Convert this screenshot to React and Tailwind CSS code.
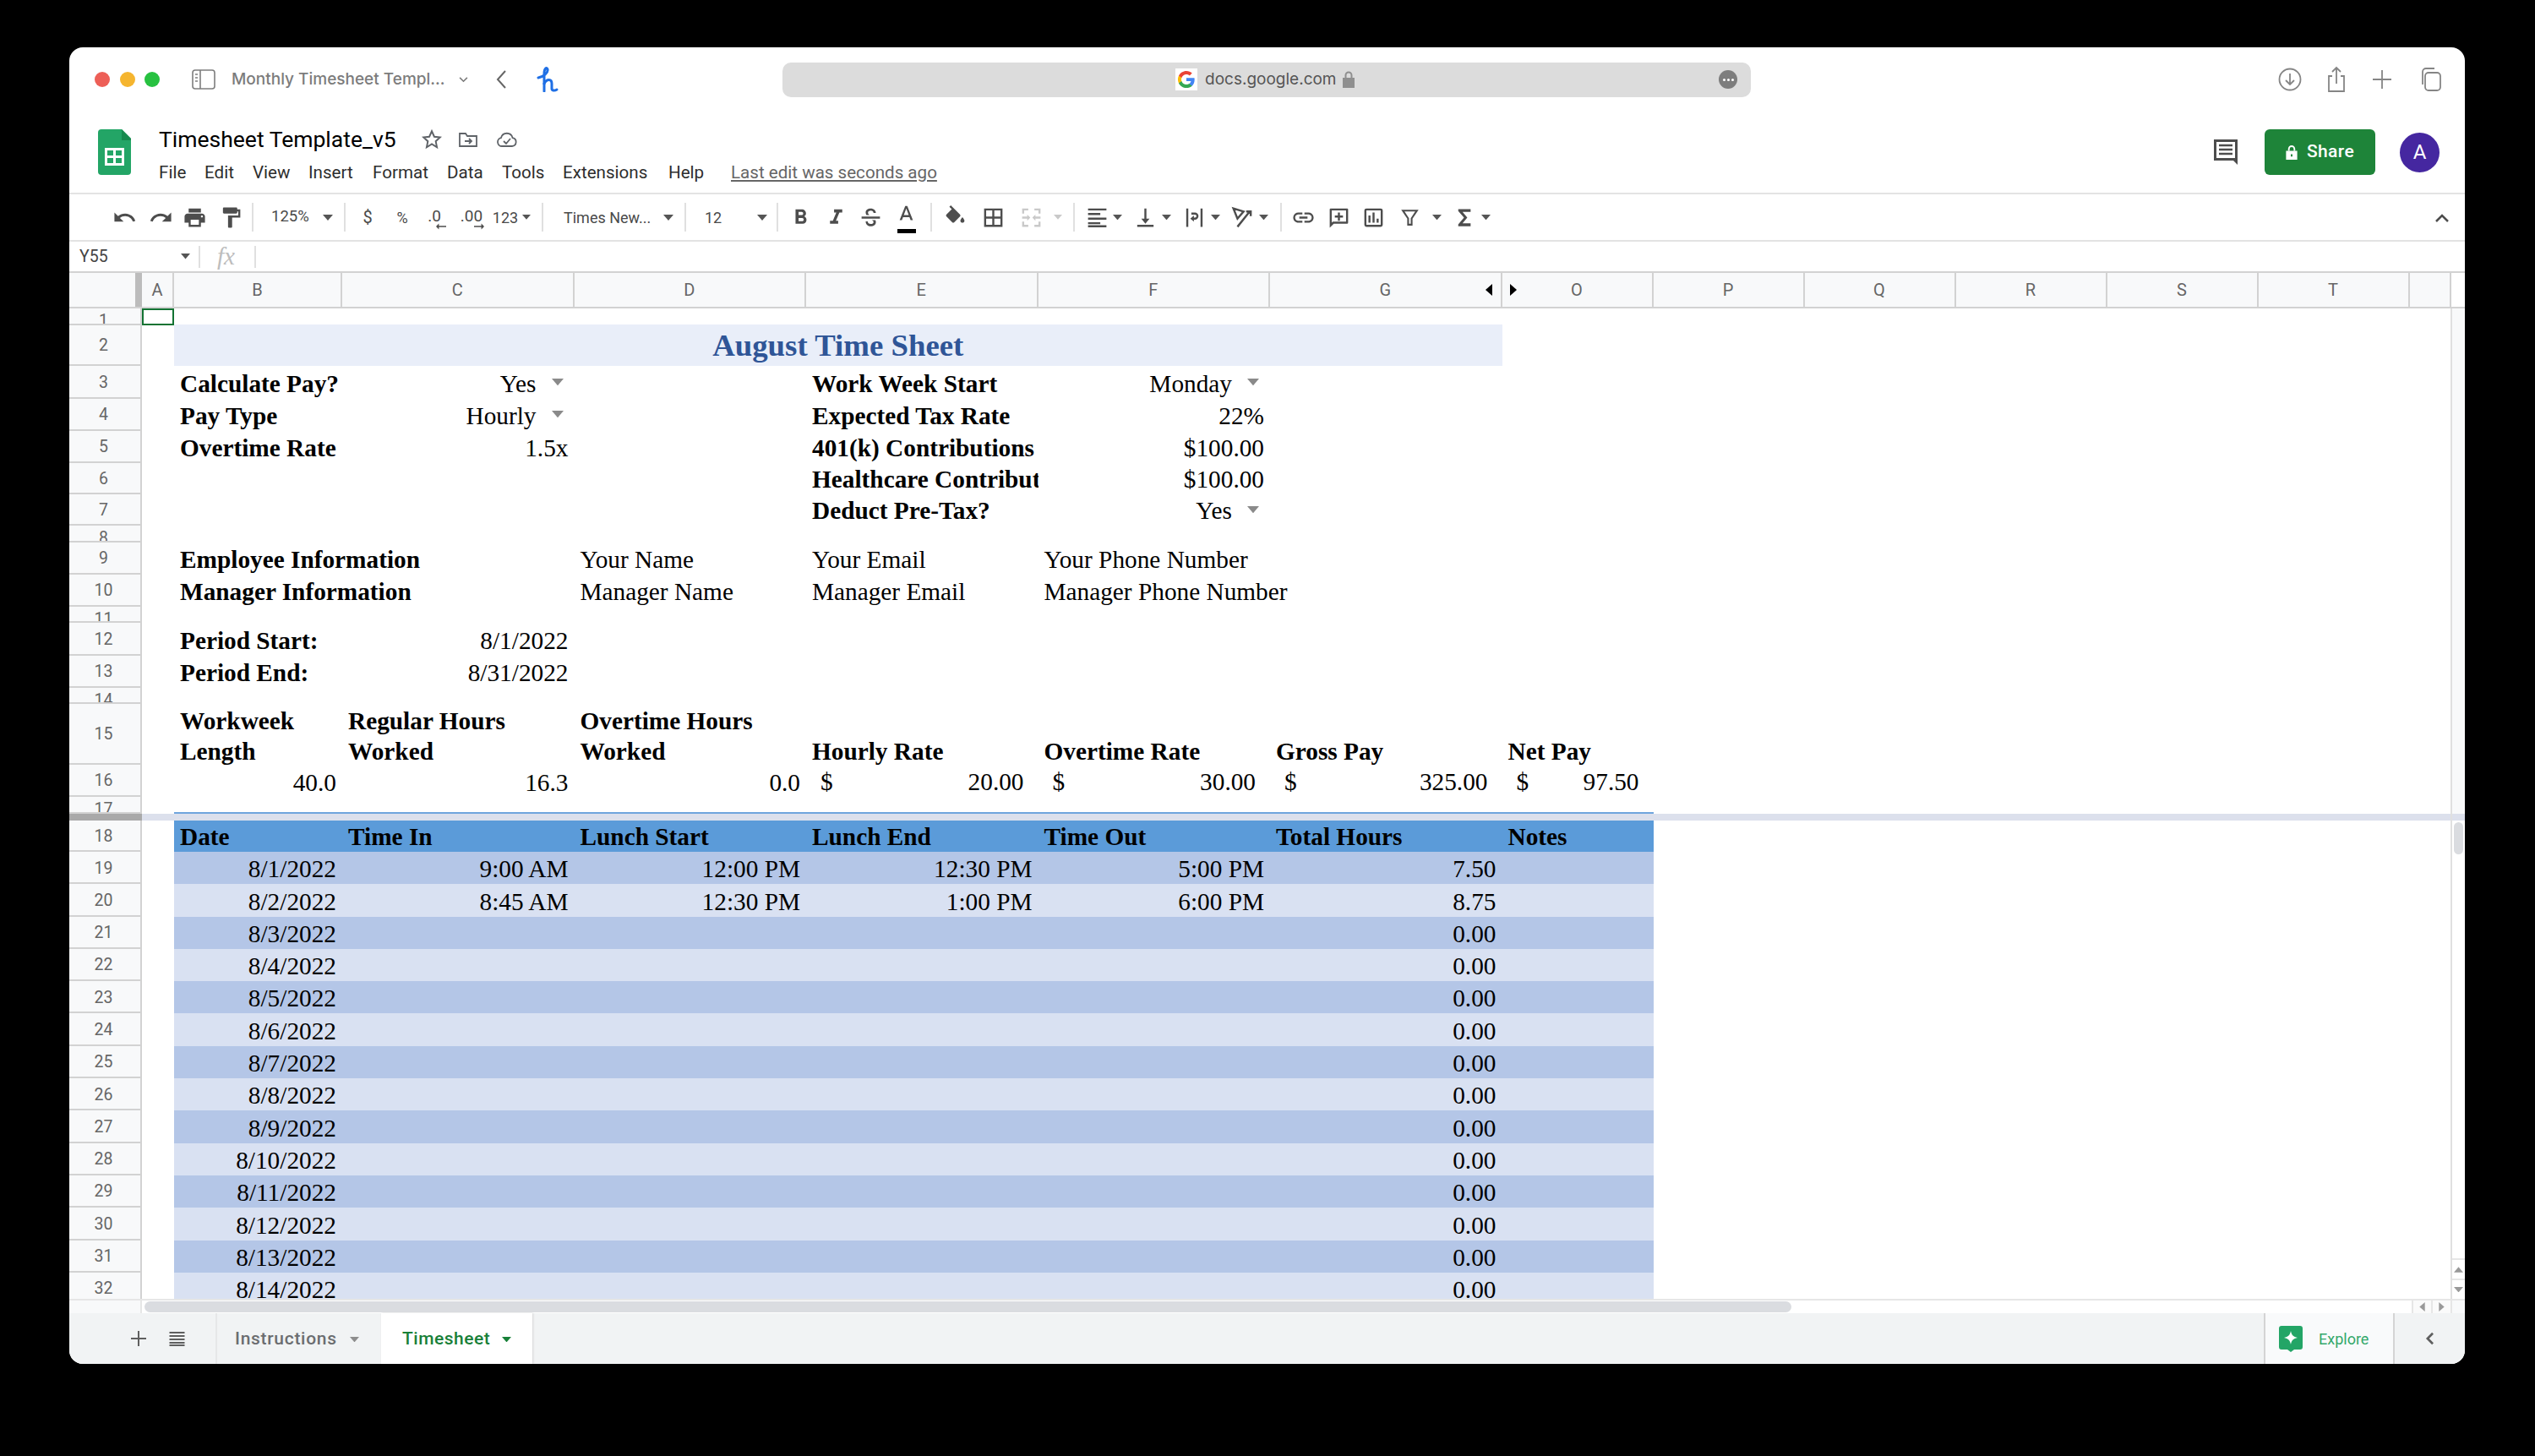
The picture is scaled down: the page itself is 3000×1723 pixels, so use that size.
import React from 'react';

const COLS = 'grid grid-cols-[86px_38px_199px_274.5px_274.5px_274.5px_274.5px_274.5px_179px_179px_179px_179px_179px_179px_49.5px]';
const SERIF = "font-['Liberation_Serif',serif] text-[29.3px] text-black";

const Mat = ({ d, s = 28, c = '#4d4d4d', className = '' }) => (
  <svg viewBox="0 0 24 24" width={s} height={s} fill={c} className={className}><path d={d} /></svg>
);

const Caret = ({ c = '#555', w = 12 }) => (
  <svg viewBox="0 0 12 7" width={w} height={(w * 7) / 12} fill={c}><path d="M0 0h12L6 7z" /></svg>
);

const Box = ({ className = '', children }) => (
  <div className={`flex h-full items-center justify-center shrink-0 ${className}`}>{children}</div>
);

const Sep = () => <div className="h-[34px] w-[2px] shrink-0 bg-[#e0e0e0]" />;

const TB = ({ className = '', children }) => (
  <span className={`font-['Roboto',sans-serif] text-[#4a4a4a] whitespace-nowrap ${className}`}>{children}</span>
);

function Toolbar() {
  return (
    <div className="flex h-[58px] items-center border-y-2 border-[#e3e3e3] pl-[44px]">
      <Box className="w-[42px]"><Mat s={29} d="M12.5 8c-2.65 0-5.05.99-6.9 2.6L2 7v9h9l-3.62-3.62c1.39-1.16 3.16-1.88 5.12-1.88 3.54 0 6.55 2.31 7.6 5.5l2.37-.78C21.08 11.03 17.15 8 12.5 8z" /></Box>
      <Box className="w-[44px]"><Mat s={29} d="M18.4 10.6C16.55 8.99 14.15 8 11.5 8c-4.65 0-8.58 3.03-9.96 7.22L3.9 16c1.05-3.19 4.05-5.5 7.6-5.5 1.95 0 3.73.72 5.12 1.88L13 16h9V7l-3.6 3.6z" /></Box>
      <Box className="w-[36px]"><Mat s={29} d="M19 8H5c-1.66 0-3 1.34-3 3v6h4v4h12v-4h4v-6c0-1.66-1.34-3-3-3zm-3 11H8v-5h8v5zm3-7c-.55 0-1-.45-1-1s.45-1 1-1 1 .45 1 1-.45 1-1 1zm-1-9H6v4h12V3z" /></Box>
      <Box className="w-[50px]"><Mat s={29} d="M18 4V3c0-.55-.45-1-1-1H5c-.55 0-1 .45-1 1v4c0 .55.45 1 1 1h12c.55 0 1-.45 1-1V6h1v4H9v11c0 .55.45 1 1 1h2c.55 0 1-.45 1-1v-9h8V4h-3z" /></Box>
      <Sep />
      <Box className="w-[69px] justify-start pl-[21px]"><TB className="text-[18.5px]">125%</TB></Box>
      <Box className="w-[38px]"><Caret /></Box>
      <Sep />
      <Box className="w-[52px]"><TB className="text-[20px]">$</TB></Box>
      <Box className="w-[30px]"><TB className="text-[18px]">%</TB></Box>
      <Box className="relative w-[46px]">
        <TB className="-mt-[2px] text-[19px]">.0</TB>
        <svg viewBox="0 0 14 8" width="12" height="8" fill="#4d4d4d" className="absolute left-[25px] top-[34px]"><path d="M4 0v3h10v2H4v3L0 4z" /></svg>
      </Box>
      <Box className="relative w-[42px]">
        <TB className="-mt-[2px] text-[19px]">.00</TB>
        <svg viewBox="0 0 14 8" width="12" height="8" fill="#4d4d4d" className="absolute left-[24px] top-[34px]"><path d="M10 0v3H0v2h10v3l4-4z" /></svg>
      </Box>
      <Box className="w-[38px]"><TB className="text-[18px]">123</TB></Box>
      <Box className="w-[12px]"><Caret w={10} /></Box>
      <div className="w-[12px] shrink-0" />
      <Sep />
      <Box className="w-[136px] justify-start pl-[24px]"><TB className="text-[18px]">Times New...</TB></Box>
      <Box className="w-[24px]"><Caret /></Box>
      <div className="w-[7px] shrink-0" />
      <Sep />
      <Box className="w-[78px] justify-start pl-[22px]"><TB className="text-[18px]">12</TB></Box>
      <Box className="w-[24px]"><Caret /></Box>
      <div className="w-[5px] shrink-0" />
      <Sep />
      <Box className="w-[52px]"><Mat s={29} d="M15.6 10.79c.97-.67 1.65-1.77 1.65-2.79 0-2.26-1.75-4-4-4H7v14h7.04c2.09 0 3.71-1.7 3.71-3.79 0-1.52-.86-2.82-2.15-3.42zM10 6.5h3c.83 0 1.5.67 1.5 1.5s-.67 1.5-1.5 1.5h-3v-3zm3.5 9H10v-3h3.5c.83 0 1.5.67 1.5 1.5s-.67 1.5-1.5 1.5z" /></Box>
      <Box className="w-[32px]"><Mat s={29} d="M10 4v3h2.21l-3.42 8H6v3h8v-3h-2.21l3.42-8H18V4z" /></Box>
      <Box className="w-[50px]"><Mat s={29} d="M12 3C9 3 7 4.500 7 7c0 1 .3 1.700.8 2.500h3.200C9.800 8.900 9.300 8 9.300 7c0-1 1-1.800 2.700-1.800s2.700 1 2.700 2.300H17C17 5 15 3 12 3zM3 11v2h18v-2H3zm9.900 3.500c1.300.5 1.800 1.200 1.800 2 0 1-1.100 1.700-2.700 1.700-1.800 0-3-.9-3-2.500H7c0 3 2.300 4.800 5 4.800 3 0 5-1.600 5-4 0-.8-.2-1.400-.5-2z" /></Box>
      <Box className="relative w-[34px]">
        <svg viewBox="0 0 24 24" width="29" height="29" fill="#4d4d4d" className="-mt-[6px]"><path d="M11 3L5.500 17h2.250l1.120-3h6.250l1.120 3h2.250L13 3h-2zm-1.380 9L12 5.670 14.380 12H9.620z" /></svg>
        <div className="absolute left-[7px] top-[41px] h-[5px] w-[22px] bg-black" />
      </Box>
      <div className="w-[12px] shrink-0" />
      <Sep />
      <Box className="w-[54px]"><Mat s={29} d="M16.56 8.94L7.62 0 6.21 1.41l2.38 2.38-5.15 5.15c-.59.59-.59 1.54 0 2.12l5.5 5.5c.29.29.68.44 1.06.44s.77-.15 1.06-.44l5.5-5.5c.59-.58.59-1.53 0-2.12zM19 11.500s-2 2.170-2 3.500c0 1.100.9 2 2 2s2-.9 2-2c0-1.330-2-3.500-2-3.500z" /></Box>
      <Box className="w-[36px]"><Mat s={29} d="M3 3v18h18V3H3zm8 16H5v-6h6v6zm0-8H5V5h6v6zm8 8h-6v-6h6v6zm0-8h-6V5h6v6z" /></Box>
      <Box className="w-[54px]"><Mat s={29} c="#c9c9c9" d="M3 3h6v2H5v3H3V3zm12 0h6v5h-2V5h-4V3zM3 16h2v3h4v2H3v-5zm16 0h2v5h-6v-2h4v-3zM3 11h5V9l3 3-3 3v-2H3v-2zm18 0v2h-5v2l-3-3 3-3v2h5z" /></Box>
      <Box className="w-[10px]"><Caret c="#c9c9c9" w={10} /></Box>
      <div className="w-[13px] shrink-0" />
      <Sep />
      <Box className="ml-[9px] w-[34px]"><Mat s={29} d="M3 3h18v2H3V3zm0 4.500h12v2H3v-2zM3 12h18v2H3v-2zm0 4.500h12v2H3v-2zM3 19.500h18v2H3v-2z" /></Box>
      <Box className="w-[14px]"><Caret w={11} /></Box>
      <Box className="ml-[8px] w-[36px]"><Mat s={29} d="M11 3h2v10h3l-4 5-4-5h3V3zM4 19h16v2H4v-2z" /></Box>
      <Box className="w-[14px]"><Caret w={11} /></Box>
      <Box className="ml-[8px] w-[36px]"><Mat s={29} d="M4 3h2v18H4V3zm14 0h2v18h-2V3zM9 7h3.500a3.500 3.500 0 0 1 0 7H11.500v2L8 13l3.500-3v2h1a1.500 1.500 0 0 0 0-3H9V7z" /></Box>
      <Box className="w-[14px]"><Caret w={11} /></Box>
      <Box className="ml-[7px] w-[36px]">
        <svg viewBox="0 0 24 24" width="29" height="29" fill="none" stroke="#4d4d4d" strokeWidth="2"><path d="M3 3l10 3-6 7-4-10zM7 21L19 6M15.500 6H20v4.500" /></svg>
      </Box>
      <Box className="w-[14px]"><Caret w={11} /></Box>
      <div className="w-[13px] shrink-0" />
      <Sep />
      <Box className="w-[50px]"><Mat s={29} d="M3.900 12c0-1.710 1.390-3.100 3.100-3.100h4V7H7c-2.760 0-5 2.240-5 5s2.240 5 5 5h4v-1.900H7c-1.710 0-3.100-1.390-3.100-3.100zM8 13h8v-2H8v2zm9-6h-4v1.900h4c1.710 0 3.100 1.390 3.100 3.100s-1.390 3.100-3.100 3.100h-4V17h4c2.760 0 5-2.240 5-5s-2.240-5-5-5z" /></Box>
      <Box className="w-[34px]"><Mat s={29} d="M4 3h16a1 1 0 0 1 1 1v13a1 1 0 0 1-1 1H7l-4 4V4a1 1 0 0 1 1-1zm1 2v12l1-1h13V5H5zm6 2h2v3h3v2h-3v3h-2v-3H8v-2h3V7z" /></Box>
      <Box className="w-[48px]"><Mat s={29} d="M5 3h14a2 2 0 0 1 2 2v14a2 2 0 0 1-2 2H5a2 2 0 0 1-2-2V5a2 2 0 0 1 2-2zm0 2v14h14V5H5zm2 5h2v7H7v-7zm4-3h2v10h-2V7zm4 6h2v4h-2v-4z" /></Box>
      <Box className="w-[38px]">
        <svg viewBox="0 0 24 24" width="25" height="25" fill="none" stroke="#4d4d4d" strokeWidth="2"><path d="M4 4h16l-6 9v7h-4v-7L4 4z" /></svg>
      </Box>
      <Box className="ml-[6px] w-[14px]"><Caret w={11} /></Box>
      <Box className="ml-[6px] w-[38px]"><Mat s={27} d="M6 3h13v3H10.500l5 6-5 6H19v3H6v-2l6-7-6-7V3z" /></Box>
      <Box className="w-[14px]"><Caret w={11} /></Box>
      <Box className="ml-auto mr-[12px] w-[30px]">
        <svg viewBox="0 0 18 11" width="18" height="11" fill="none" stroke="#4d4d4d" strokeWidth="2.500"><path d="M2 10l7-7 7 7" /></svg>
      </Box>
    </div>
  );
}

const H = ['A', 'B', 'C', 'D', 'E', 'F', 'G', 'O', 'P', 'Q', 'R', 'S', 'T', ''];

function ColHeader() {
  return (
    <div className="flex h-[44px] border-y-2 border-[#d2d2d2]">
      <div className={`${COLS} w-[2818px] shrink-0`}>
        <div className="flex justify-end bg-[#f8f9fa]"><div className="w-[8px] bg-[#bcbcbc]" /></div>
        {H.map((l, i) => (
          <div key={i} className="relative flex items-center justify-center border-r-2 border-[#d2d2d2] bg-[#f8f9fa] font-['Roboto',sans-serif] text-[20px] text-[#666]">
            {l}
            {l === 'G' && (
              <svg viewBox="0 0 8 14" width="8" height="14" fill="#000" className="absolute right-[10px] top-[13px]"><path d="M8 0v14L0 7z" /></svg>
            )}
            {l === 'O' && (
              <svg viewBox="0 0 8 14" width="8" height="14" fill="#000" className="absolute left-[9px] top-[13px]"><path d="M0 0v14l8-7z" /></svg>
            )}
          </div>
        ))}
      </div>
    </div>
  );
}

const Head = ({ n, short }) => (
  <div className={`flex justify-center overflow-hidden border-r-2 border-b-2 border-[#d2d2d2] bg-[#f8f9fa] pr-[3px] font-['Roboto',sans-serif] text-[19.5px] text-[#666] ${short ? 'leading-[30px]' : 'items-center pt-[2px]'}`}>
    {n}
  </div>
);

const B = (t, extra = {}) => ({ t, bold: true, ...extra });
const T = (t, extra = {}) => ({ t, ...extra });
const R = (t, extra = {}) => ({ t, right: true, ...extra });
const Acc = (v) => ({ acc: v });

function Cell({ c, bg = '' }) {
  if (!c) return <div className={bg} />;
  if (c.acc) {
    return (
      <div className={`flex items-end justify-between px-[17px] ${SERIF} ${bg}`}>
        <span className="leading-[35px]">$</span>
        <span className="leading-[35px]">{c.acc}</span>
      </div>
    );
  }
  const lead = c.wrap ? 'whitespace-pre leading-[36px] -mb-[2px]' : c.tight ? 'leading-[34px]' : 'leading-[36px]';
  return (
    <div className={`relative flex items-end whitespace-nowrap ${SERIF} ${c.right ? 'justify-end' : ''} ${c.dd ? 'pr-[45px]' : 'px-[7px]'} ${c.clip ? 'overflow-hidden pr-0' : ''} ${bg}`}>
      <span className={`${lead} ${c.bold ? 'font-bold' : ''}`}>{c.t}</span>
      {c.dd && (
        <span className="absolute right-[13px] top-1/2 -translate-y-[60%]"><Caret c="#8a8a8a" w={14} /></span>
      )}
    </div>
  );
}

const Row = ({ n, h, short, cells = [] }) => (
  <div className={`${COLS} ${h}`}>
    <Head n={n} short={short} />
    <div />
    {cells.map((c, i) => <Cell key={i} c={c} />)}
  </div>
);

const tableRows = [
  ['8/1/2022', '9:00 AM', '12:00 PM', '12:30 PM', '5:00 PM', '7.50'],
  ['8/2/2022', '8:45 AM', '12:30 PM', '1:00 PM', '6:00 PM', '8.75'],
  ['8/3/2022', '', '', '', '', '0.00'],
  ['8/4/2022', '', '', '', '', '0.00'],
  ['8/5/2022', '', '', '', '', '0.00'],
  ['8/6/2022', '', '', '', '', '0.00'],
  ['8/7/2022', '', '', '', '', '0.00'],
  ['8/8/2022', '', '', '', '', '0.00'],
  ['8/9/2022', '', '', '', '', '0.00'],
  ['8/10/2022', '', '', '', '', '0.00'],
  ['8/11/2022', '', '', '', '', '0.00'],
  ['8/12/2022', '', '', '', '', '0.00'],
  ['8/13/2022', '', '', '', '', '0.00'],
  ['8/14/2022', '', '', '', '', '0.00'],
];

function Sheet() {
  return (
    <div className="flex h-[1172px] overflow-hidden">
      <div className="w-[2818px] shrink-0 overflow-hidden">
        <div className={`${COLS} relative h-[19px]`}>
          <Head n={1} short />
          <div className="h-[20px] border-2 border-[#137333]" />
        </div>
        <div className={`${COLS} h-[49px]`}>
          <Head n={2} />
          <div />
          <div className="col-span-6 flex items-end justify-center bg-[#e9eef9] font-['Liberation_Serif',serif] text-[36.8px] font-bold leading-[49px] text-[#2f5597]">
            August Time Sheet
          </div>
        </div>
        <Row n={3} h="h-[39px]" cells={[B('Calculate Pay?'), R('Yes', { dd: 1 }), null, B('Work Week Start'), R('Monday', { dd: 1 })]} />
        <Row n={4} h="h-[38px]" cells={[B('Pay Type'), R('Hourly', { dd: 1 }), null, B('Expected Tax Rate'), R('22%')]} />
        <Row n={5} h="h-[38px]" cells={[B('Overtime Rate'), R('1.5x'), null, B('401(k) Contributions'), R('$100.00')]} />
        <Row n={6} h="h-[37px]" cells={[null, null, null, B('Healthcare Contributions', { clip: 1 }), R('$100.00')]} />
        <Row n={7} h="h-[37px]" cells={[null, null, null, B('Deduct Pre-Tax?'), R('Yes', { dd: 1 })]} />
        <Row n={8} h="h-[20px]" short />
        <Row n={9} h="h-[38px]" cells={[B('Employee Information'), null, T('Your Name'), T('Your Email'), T('Your Phone Number')]} />
        <Row n={10} h="h-[38px]" cells={[B('Manager Information'), null, T('Manager Name'), T('Manager Email'), T('Manager Phone Number')]} />
        <Row n={11} h="h-[19px]" short />
        <Row n={12} h="h-[39px]" cells={[B('Period Start:'), R('8/1/2022')]} />
        <Row n={13} h="h-[38px]" cells={[B('Period End:'), R('8/31/2022')]} />
        <Row n={14} h="h-[19px]" short />
        <Row
          n={15}
          h="h-[72px]"
          cells={[
            B('Workweek\nLength', { wrap: 1 }),
            B('Regular Hours\nWorked', { wrap: 1 }),
            B('Overtime Hours\nWorked', { wrap: 1 }),
            B('Hourly Rate', { wrap: 1 }),
            B('Overtime Rate', { wrap: 1 }),
            B('Gross Pay', { wrap: 1 }),
            B('Net Pay', { wrap: 1 }),
          ]}
        />
        <Row n={16} h="h-[38px]" cells={[R('40.0', { tight: 1 }), R('16.3', { tight: 1 }), R('0.0', { tight: 1 }), Acc('20.00'), Acc('30.00'), Acc('325.00'), Acc('97.50')]} />
        <div className={`${COLS} h-[20px]`}>
          <Head n={17} short />
          <div />
          <div className="col-span-7 border-b-2 border-[#6fa5dd]" />
        </div>
        <div className="flex h-[8px]">
          <div className="w-[86px] bg-[#a9a9a9]" />
          <div className="flex-1 bg-[#dce0ec]" />
        </div>
        <div className={`${COLS} h-[37px]`}>
          <Head n={18} />
          <div />
          {['Date', 'Time In', 'Lunch Start', 'Lunch End', 'Time Out', 'Total Hours', 'Notes'].map((t) => (
            <Cell key={t} c={B(t)} bg="bg-[#5b9bd9]" />
          ))}
        </div>
        {tableRows.map((r, i) => {
          const bg = i % 2 === 0 ? 'bg-[#b4c6e7]' : 'bg-[#d9e1f2]';
          return (
            <div key={i} className={`${COLS} h-[38.3px]`}>
              <Head n={19 + i} />
              <div />
              {r.map((v, j) => <Cell key={j} c={v ? R(v) : null} bg={bg} />)}
              <div className={bg} />
            </div>
          );
        })}
      </div>
      <div className="flex w-[17px] shrink-0 flex-col border-l-2 border-[#e0e0e0]">
        <div className="h-[598px] bg-[#f8f9fa]" />
        <div className="h-[8px] bg-[#dce0ec]" />
        <div className="mx-[2px] mt-[2px] h-[38px] rounded-full bg-[#dadce0]" />
        <div className="flex-1" />
        <div className="flex h-[24px] items-center justify-center border-t-2 border-[#e6e6e6]">
          <svg viewBox="0 0 12 7" width="11" height="7" fill="#999"><path d="M0 7h12L6 0z" /></svg>
        </div>
        <div className="flex h-[24px] items-center justify-center border-t-2 border-[#e6e6e6]">
          <Caret c="#999" w={11} />
        </div>
      </div>
    </div>
  );
}

function HScroll() {
  return (
    <div className="flex h-[17px] border-t-2 border-[#e6e6e6]">
      <div className="w-[86px] shrink-0 border-r-2 border-[#e6e6e6] bg-[#f8f9fa]" />
      <div className="ml-[3px] mt-[1px] h-[13px] w-[1949px] rounded-full bg-[#dadce0]" />
      <div className="flex-1" />
      <div className="flex w-[23px] items-center justify-center border-l-2 border-[#e6e6e6] bg-[#fafafa]">
        <svg viewBox="0 0 7 12" width="7" height="11" fill="#999"><path d="M7 0v12L0 6z" /></svg>
      </div>
      <div className="flex w-[23px] items-center justify-center border-l-2 border-[#e6e6e6] bg-[#fafafa]">
        <svg viewBox="0 0 7 12" width="7" height="11" fill="#999"><path d="M0 0v12l7-6z" /></svg>
      </div>
      <div className="w-[17px] border-l-2 border-[#e6e6e6] bg-[#f8f9fa]" />
    </div>
  );
}

function TabBar() {
  return (
    <div className="flex h-[60px] items-stretch bg-[#f1f3f4] font-['Roboto',sans-serif]">
      <Box className="ml-[66px] w-[32px]">
        <svg viewBox="0 0 18 18" width="18" height="18" fill="#5f5f5f"><path d="M8 0h2v8h8v2h-8v8H8v-8H0V8h8z" /></svg>
      </Box>
      <Box className="ml-[13.5px] w-[32px]">
        <svg viewBox="0 0 18 18" width="19" height="18" fill="#5f5f5f"><path d="M0 1h18v2H0zM0 5h18v2H0zM0 9h18v2H0zM0 13h18v2H0zM0 16h18v2H0z" /></svg>
      </Box>
      <div className="ml-[29.5px] flex w-[196px] items-center border-l-2 border-[#e6e7e8] pl-[21px] pt-[2px]">
        <span className="text-[21px] font-medium tracking-[0.7px] text-[#6b6d70]">Instructions</span>
        <span className="ml-[15px]"><Caret c="#8d8d8d" w={11} /></span>
      </div>
      <div className="flex w-[179px] items-center bg-white pl-[25px] pt-[2px] shadow-[1px_0_2px_#d5d5d5]">
        <span className="text-[21px] font-medium tracking-[0.5px] text-[#188038]">Timesheet</span>
        <span className="ml-[14px]"><Caret c="#188038" w={11} /></span>
      </div>
      <div className="ml-auto flex w-[155px] items-center border-x-2 border-[#d4d4d4] bg-[#f9fafb] pl-[16px]">
        <svg viewBox="0 0 28 31" width="28" height="31">
          <path fill="#23a566" d="M3 0h22a3 3 0 0 1 3 3v22a3 3 0 0 1-3 3h-7l-4 3-4-3H3a3 3 0 0 1-3-3V3a3 3 0 0 1 3-3z" />
          <path fill="#fff" d="M14 6c1 5 3 7 8 8-5 1-7 3-8 8-1-5-3-7-8-8 5-1 7-3 8-8z" />
        </svg>
        <span className="ml-[19px] text-[18px] text-[#34a86b]">Explore</span>
      </div>
      <Box className="w-[83px]">
        <svg viewBox="0 0 11 18" width="11" height="16" fill="none" stroke="#5f5f5f" strokeWidth="3"><path d="M9.500 2L2.500 9l7 7" /></svg>
      </Box>
    </div>
  );
}

function BrowserBar() {
  return (
    <div className="flex h-[76px] items-center">
      <div className="flex w-[844px] shrink-0 items-center pl-[30px]">
        <div className="flex gap-[11.5px]">
          <div className="h-[18px] w-[18px] rounded-full bg-[#ed5f57]" />
          <div className="h-[18px] w-[18px] rounded-full bg-[#f5b52f]" />
          <div className="h-[18px] w-[18px] rounded-full bg-[#27c140]" />
        </div>
        <svg viewBox="0 0 28 24" width="28" height="24" fill="none" stroke="#7d7d7d" strokeWidth="1.6" className="ml-[38px]">
          <rect x="1" y="1" width="26" height="22" rx="3" />
          <path d="M10 1v22M4 6h3M4 10h3M4 14h3" />
        </svg>
        <span className="ml-[19px] w-[251px] whitespace-nowrap font-['Inter',sans-serif] text-[19px] font-medium text-[#7c7c7c]">Monthly Timesheet Templ...</span>
        <svg viewBox="0 0 12 8" width="11" height="7" fill="none" stroke="#7c7c7c" strokeWidth="1.8" className="ml-[18px]"><path d="M1 1l5 5 5-5" /></svg>
        <svg viewBox="0 0 12 24" width="12" height="24" fill="none" stroke="#666" strokeWidth="2" className="ml-[33px]"><path d="M11 2L2 12l9 10" /></svg>
        <svg viewBox="0 0 26 30" width="26" height="30" fill="none" stroke="#1f6fe5" strokeWidth="3" strokeLinecap="round" strokeLinejoin="round" className="ml-[36px]">
          <path d="M2 13c6-1 12-6 11-10-1-3-4-1-4 5v21" />
          <path d="M9 20c3-6 9-6 9 0v6c0 2 3 3 6 1" />
        </svg>
      </div>
      <div className="relative flex h-[41px] w-[1146px] shrink-0 items-center rounded-[10px] bg-[#dcdcdc] pl-[465px]">
        <div className="flex h-[26px] w-[26px] items-center justify-center bg-white">
          <svg viewBox="0 0 24 24" width="22" height="22">
            <path fill="#4285F4" d="M22.56 12.25c0-.78-.07-1.53-.2-2.25H12v4.26h5.92c-.26 1.37-1.04 2.53-2.21 3.31v2.77h3.57c2.08-1.92 3.28-4.74 3.28-8.09z" />
            <path fill="#34A853" d="M12 23c2.97 0 5.46-.98 7.28-2.66l-3.57-2.77c-.98.66-2.23 1.06-3.71 1.06-2.86 0-5.29-1.93-6.16-4.53H2.18v2.84C3.99 20.53 7.7 23 12 23z" />
            <path fill="#FBBC05" d="M5.84 14.09c-.22-.66-.35-1.36-.35-2.09s.13-1.43.35-2.09V7.07H2.18C1.43 8.55 1 10.22 1 12s.43 3.45 1.18 4.93l2.85-2.22.81-.62z" />
            <path fill="#EA4335" d="M12 5.38c1.62 0 3.06.56 4.21 1.64l3.15-3.15C17.45 2.09 14.97 1 12 1 7.7 1 3.99 3.47 2.18 7.07l3.66 2.84c.87-2.6 3.3-4.53 6.16-4.53z" />
          </svg>
        </div>
        <span className="ml-[9px] whitespace-nowrap font-['Inter',sans-serif] text-[19px] text-[#555]">docs.google.com</span>
        <svg viewBox="0 0 14 20" width="14" height="20" fill="#8f8f8f" className="ml-[7px]">
          <path d="M0 8h14v12H0z" />
          <path d="M3.500 8V5a3.500 3.500 0 0 1 7 0v3" fill="none" stroke="#8f8f8f" strokeWidth="2" />
        </svg>
        <div className="absolute right-[16px] flex h-[22px] w-[22px] items-center justify-center gap-[2px] rounded-full bg-[#7d7d7d]">
          <span className="h-[3px] w-[3px] rounded-full bg-white" />
          <span className="h-[3px] w-[3px] rounded-full bg-white" />
          <span className="h-[3px] w-[3px] rounded-full bg-white" />
        </div>
      </div>
      <svg viewBox="0 0 28 28" width="28" height="28" fill="none" stroke="#858585" strokeWidth="1.8" className="ml-[624px] shrink-0">
        <circle cx="14" cy="14" r="12.5" />
        <path d="M14 7v13M9 15l5 5 5-5" />
      </svg>
      <svg viewBox="0 0 24 32" width="24" height="32" fill="none" stroke="#858585" strokeWidth="1.8" className="ml-[29px] shrink-0">
        <path d="M7 12H3v18h18V12h-4M12 21V2M7 7l5-5 5 5" />
      </svg>
      <svg viewBox="0 0 22 22" width="22" height="22" fill="none" stroke="#858585" strokeWidth="1.8" className="ml-[31px] shrink-0">
        <path d="M11 0v22M0 11h22" />
      </svg>
      <svg viewBox="0 0 27 28" width="27" height="28" fill="none" stroke="#858585" strokeWidth="1.8" className="ml-[33px] shrink-0">
        <rect x="7" y="6" width="18" height="21" rx="4" />
        <path d="M4 20V5a4 4 0 0 1 4-4h10" />
      </svg>
    </div>
  );
}

function DocHeader() {
  const menu = [
    ['File', 'w-[54px]'], ['Edit', 'w-[57px]'], ['View', 'w-[66px]'], ['Insert', 'w-[76px]'], ['Format', 'w-[88px]'],
    ['Data', 'w-[65px]'], ['Tools', 'w-[72px]'], ['Extensions', 'w-[125px]'], ['Help', 'w-[74px]'],
  ];
  return (
    <div className="flex h-[96px] items-center">
      <svg viewBox="0 0 39 54" width="39" height="54" className="ml-[34px] shrink-0">
        <path fill="#23a566" d="M4 0h24l11 11v39a4 4 0 0 1-4 4H4a4 4 0 0 1-4-4V4a4 4 0 0 1 4-4z" />
        <path fill="#178a4e" d="M28 0l11 11v2H28z" />
        <path fill="#fff" d="M8 22h23v21H8zm3 3v6h7v-6zm10 0v6h7v-6zM11 34v6h7v-6zm10 0v6h7v-6z" />
      </svg>
      <div className="ml-[33px] flex flex-col self-start pt-[15px] font-['Roboto',sans-serif]">
        <div className="flex h-[36px] items-center">
          <span className="w-[280px] whitespace-nowrap text-[26.5px] text-black">Timesheet Template_v5</span>
          <svg viewBox="0 0 24 24" width="26" height="26" fill="none" stroke="#5f6368" strokeWidth="1.8" className="ml-[30px]"><path d="M12 3l2.700 6 6.300.7-4.700 4.300 1.300 6.500L12 17l-5.600 3.500 1.300-6.500L3 9.700 9.300 9z" /></svg>
          <svg viewBox="0 0 24 24" width="24" height="24" fill="none" stroke="#5f6368" strokeWidth="1.8" className="ml-[18px]"><path d="M2 5h7l2 3h11v12H2zM8 14h8M13 11l3 3-3 3" /></svg>
          <svg viewBox="0 0 26 24" width="26" height="24" fill="none" stroke="#5f6368" strokeWidth="1.8" className="ml-[21px]"><path d="M7 20a5 5 0 0 1-1-9.900 7 7 0 0 1 13.600 0A5 5 0 0 1 19 20zM9 14l3 3 5-6" /></svg>
        </div>
        <div className="mt-[6px] flex h-[30px] items-center text-[20.6px] text-[#2e2e2e]">
          {menu.map(([m, w]) => <span key={m} className={`${w} whitespace-nowrap`}>{m}</span>)}
          <span className="whitespace-nowrap text-[#666] underline">Last edit was seconds ago</span>
        </div>
      </div>
      <svg viewBox="0 0 28 30" width="28" height="30" fill="none" className="ml-auto shrink-0">
        <path d="M1.500 1.500h25v22H1.500z" stroke="#4d4d4d" strokeWidth="3" />
        <path d="M6 7h16M6 12h16M6 17h16" stroke="#4d4d4d" strokeWidth="2.400" />
        <path d="M22 24h6v6z" fill="#4d4d4d" />
      </svg>
      <div className="ml-[32px] flex h-[54px] w-[131px] shrink-0 items-center justify-center gap-[11px] rounded-[6px] bg-[#1e8439] font-['Roboto',sans-serif] text-[21px] font-medium text-white">
        <svg viewBox="0 0 14 18" width="14" height="17" fill="#fff">
          <path fillRule="evenodd" d="M0 7h14v11H0zM6 11v3h2v-3z" />
          <path d="M3.500 7V4.500a3.500 3.500 0 0 1 7 0V7" fill="none" stroke="#fff" strokeWidth="2" />
        </svg>
        <span className="tracking-[0.4px]">Share</span>
      </div>
      <div className="ml-[29px] mr-[30px] flex h-[47px] w-[47px] shrink-0 items-center justify-center rounded-full bg-[#4527a0] font-['Roboto',sans-serif] text-[24px] text-white">A</div>
    </div>
  );
}

function FormulaBar() {
  return (
    <div className="flex h-[35px] items-center">
      <span className="ml-[12px] w-[120px] font-['Roboto',sans-serif] text-[19.5px] text-[#444]">Y55</span>
      <Caret w={11} />
      <div className="ml-[10px] h-[26px] w-[2px] bg-[#e0e0e0]" />
      <span className="ml-[20px] w-[44px] font-['Liberation_Serif',serif] text-[29px] italic leading-none text-[#bdbdbd]">fx</span>
      <div className="h-[26px] w-[2px] bg-[#e0e0e0]" />
    </div>
  );
}

export default function App() {
  return (
    <div className="h-[1723px] w-[3000px] overflow-hidden bg-black pl-[82px] pt-[56px]">
      <div className="flex h-[1558px] w-[2835px] flex-col overflow-hidden rounded-[16px] bg-white">
        <BrowserBar />
        <DocHeader />
        <Toolbar />
        <FormulaBar />
        <ColHeader />
        <Sheet />
        <HScroll />
        <TabBar />
      </div>
    </div>
  );
}
